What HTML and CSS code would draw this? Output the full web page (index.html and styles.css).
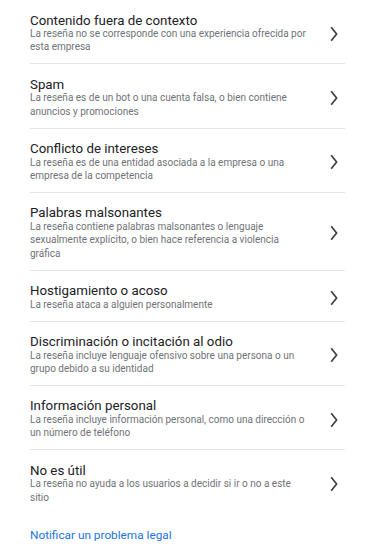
FILE: index.html
```html
<!DOCTYPE html>
<html>

	<head>
		<meta charset="UTF-8">
		<title>Denunciar reseña</title>
		<link rel="stylesheet" href="styles.css">
	</head>
	<body>
		<div class="wrap">
			<ul class="list">
				<li class="item">
					<div class="txt">
						<p class="tit">Contenido fuera de contexto</p>
						<p class="sub">La reseña no se corresponde con una experiencia ofrecida por esta empresa</p>
					</div>
					<svg class="arr" viewBox="0 0 8 16"><polyline points="1.2,1.2 6.6,8 1.2,14.8" /></svg>
				</li>
				<li class="item">
					<div class="txt">
						<p class="tit">Spam</p>
						<p class="sub">La reseña es de un bot o una cuenta falsa, o bien contiene anuncios y promociones</p>
					</div>
					<svg class="arr" viewBox="0 0 8 16"><polyline points="1.2,1.2 6.6,8 1.2,14.8" /></svg>
				</li>
				<li class="item">
					<div class="txt">
						<p class="tit">Conflicto de intereses</p>
						<p class="sub">La reseña es de una entidad asociada a la empresa o una empresa de la competencia</p>
					</div>
					<svg class="arr" viewBox="0 0 8 16"><polyline points="1.2,1.2 6.6,8 1.2,14.8" /></svg>
				</li>
				<li class="item">
					<div class="txt">
						<p class="tit">Palabras malsonantes</p>
						<p class="sub">La reseña contiene palabras malsonantes o lenguaje sexualmente explícito, o bien hace referencia a violencia gráfica</p>
					</div>
					<svg class="arr" viewBox="0 0 8 16"><polyline points="1.2,1.2 6.6,8 1.2,14.8" /></svg>
				</li>
				<li class="item">
					<div class="txt">
						<p class="tit">Hostigamiento o acoso</p>
						<p class="sub">La reseña ataca a alguien personalmente</p>
					</div>
					<svg class="arr" viewBox="0 0 8 16"><polyline points="1.2,1.2 6.6,8 1.2,14.8" /></svg>
				</li>
				<li class="item">
					<div class="txt">
						<p class="tit">Discriminación o incitación al odio</p>
						<p class="sub">La reseña incluye lenguaje ofensivo sobre una persona o un grupo debido a su identidad</p>
					</div>
					<svg class="arr" viewBox="0 0 8 16"><polyline points="1.2,1.2 6.6,8 1.2,14.8" /></svg>
				</li>
				<li class="item">
					<div class="txt">
						<p class="tit">Información personal</p>
						<p class="sub">La reseña incluye información personal, como una dirección o un número de teléfono</p>
					</div>
					<svg class="arr" viewBox="0 0 8 16"><polyline points="1.2,1.2 6.6,8 1.2,14.8" /></svg>
				</li>
				<li class="item">
					<div class="txt">
						<p class="tit">No es útil</p>
						<p class="sub">La reseña no ayuda a los usuarios a decidir si ir o no a este sitio</p>
					</div>
					<svg class="arr" viewBox="0 0 8 16"><polyline points="1.2,1.2 6.6,8 1.2,14.8" /></svg>
				</li>
			</ul>
			<a class="legal" href="#">Notificar un problema legal</a>
		</div>
	</body>
</html>
```

FILE: styles.css
```css
body {
	margin: 0;
	background: #fff;
	font-family: Roboto, "Noto Sans", sans-serif;
}

ul,
li,
p {
	margin: 0;
	padding: 0;
	list-style: none;
}

.wrap {
	padding: 0 30px;
}

.item {
	display: flex;
	align-items: center;
	padding: 13.5px 0 9.5px;
	border-bottom: 1px solid #e6e6e6;
}

.item:last-child {
	border-bottom: none;
}

.txt {
	flex: 1;
	padding-right: 19px;
}

.tit {
	font-size: 13.3px;
	line-height: 13.5px;
	color: #202124;
}

.sub {
	font-size: 10px;
	line-height: 13.4px;
	color: #6f7377;
}

.arr {
	width: 8px;
	height: 16px;
	margin-right: 7px;
	fill: none;
	stroke: #3c4043;
	stroke-width: 1.7;
}

.legal {
	display: block;
	margin-top: 14px;
	font-size: 11.8px;
	color: #1a73e8;
	text-decoration: none;
}
```
